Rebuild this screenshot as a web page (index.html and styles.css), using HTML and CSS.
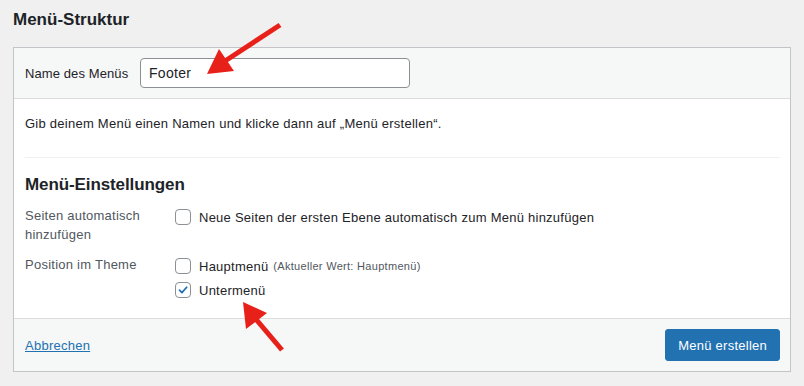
FILE: index.html
```html
<!DOCTYPE html>
<html lang="de">
<head>
<meta charset="utf-8">
<title>Menü-Struktur</title>
<link rel="stylesheet" href="styles.css">
</head>
<body>
<div class="page">
  <h2 class="page-title">Menü-Struktur</h2>
  <div class="menu-box">
    <div class="box-header">
      <label class="name-label" for="menu-name">Name des Menüs</label>
      <input class="name-input" id="menu-name" type="text" value="Footer">
    </div>
    <div class="box-body">
      <p class="hint">Gib deinem Menü einen Namen und klicke dann auf „Menü erstellen“.</p>
      <div class="divider"></div>
      <h3 class="settings-title">Menü-Einstellungen</h3>
      <div class="settings-row">
        <div class="settings-label">Seiten automatisch hinzufügen</div>
        <div class="settings-options">
          <label class="option"><span class="checkbox"></span>Neue Seiten der ersten Ebene automatisch zum Menü hinzufügen</label>
        </div>
      </div>
      <div class="settings-row second">
        <div class="settings-label">Position im Theme</div>
        <div class="settings-options">
          <label class="option"><span class="checkbox"></span>Hauptmenü <span class="note">(Aktueller Wert: Hauptmenü)</span></label>
          <label class="option"><span class="checkbox checked"><svg viewBox="0 0 16 16" width="16" height="16"><path d="M4 8.2 L6.8 11 L12.2 4.8" fill="none" stroke="#2271b1" stroke-width="2" stroke-linecap="round" stroke-linejoin="round"/></svg></span>Untermenü</label>
        </div>
      </div>
    </div>
    <div class="box-footer">
      <a class="cancel" href="#">Abbrechen</a>
      <button class="primary" type="button">Menü erstellen</button>
    </div>
  </div>
</div>
<svg class="arrows" width="804" height="386" viewBox="0 0 804 386">
  <line x1="280" y1="25" x2="222" y2="63" stroke="#e8201a" stroke-width="5" stroke-linecap="butt"/>
  <polygon points="207,74 219,49 234,71" fill="#e8201a"/>
  <line x1="282" y1="350" x2="255" y2="318" stroke="#e8201a" stroke-width="5"/>
  <polygon points="243,302 246,329 267,313" fill="#e8201a"/>
</svg>
</body>
</html>
```

FILE: styles.css
```css
* { box-sizing: border-box; }

html, body {
  margin: 0;
  padding: 0;
  background: #f0f0f1;
  font-family: "Liberation Sans", Arial, sans-serif;
  font-size: 13px;
  color: #1d2327;
}

.page {
  padding: 9px 14px 0 13px;
}

.page-title {
  margin: 0 0 16px;
  font-size: 17px;
  line-height: 22px;
  font-weight: 700;
  color: #1d2327;
}

.menu-box {
  width: 778px;
  border: 1px solid #c3c4c7;
  background: #fff;
  letter-spacing: 0.25px;
}

.box-header {
  display: flex;
  align-items: center;
  padding: 10px 10px 10px 11px;
  background: #f6f7f7;
  border-bottom: 1px solid #dcdcde;
}

.name-label {
  width: 115px;
  color: #1d2327;
  letter-spacing: 0.1px;
}

.name-input {
  width: 270px;
  height: 30px;
  border: 1px solid #8c8f94;
  border-radius: 4px;
  padding: 0 8px;
  font-family: inherit;
  font-size: 14px;
  letter-spacing: 0.3px;
  color: #1d2327;
  background: #fff;
}

.box-body {
  padding: 15px 10px 16px 11px;
}

.hint {
  margin: 0;
  line-height: 20px;
}

.divider {
  height: 1px;
  background: #f0f0f1;
  margin: 23px 0 16px;
}

.settings-title {
  margin: 0 0 9px;
  font-size: 17px;
  line-height: 22px;
  font-weight: 700;
  letter-spacing: -0.1px;
}

.settings-row {
  display: grid;
  grid-template-columns: 150px 1fr;
  align-items: start;
}

.settings-row.second {
  margin-top: 10px;
}

.settings-label {
  color: #50575e;
  line-height: 19px;
  padding-top: 1px;
  padding-right: 10px;
}

.settings-options {
  display: flex;
  flex-direction: column;
}

.option {
  display: flex;
  align-items: center;
  height: 24px;
  color: #1d2327;
  white-space: pre;
}

.checkbox {
  width: 16px;
  height: 16px;
  border: 1px solid #8c8f94;
  border-radius: 4px;
  background: #fff;
  margin-right: 8px;
  flex: none;
  display: flex;
  align-items: center;
  justify-content: center;
}

.checkbox svg {
  display: block;
}

.note {
  font-size: 11px;
  color: #50575e;
  margin-left: 1px;
  letter-spacing: 0.3px;
}

.box-footer {
  display: flex;
  align-items: center;
  justify-content: space-between;
  padding: 10px 10px 10px 11px;
  background: #f6f7f7;
  border-top: 1px solid #dcdcde;
}

.cancel {
  color: #2271b1;
  text-decoration: underline;
}

.primary {
  height: 32px;
  padding: 0 12px;
  border: 1px solid #2271b1;
  border-radius: 3px;
  background: #2271b1;
  color: #fff;
  font-family: inherit;
  font-size: 13px;
  letter-spacing: 0.25px;
}

.arrows {
  position: absolute;
  left: 0;
  top: 0;
  pointer-events: none;
}
```
